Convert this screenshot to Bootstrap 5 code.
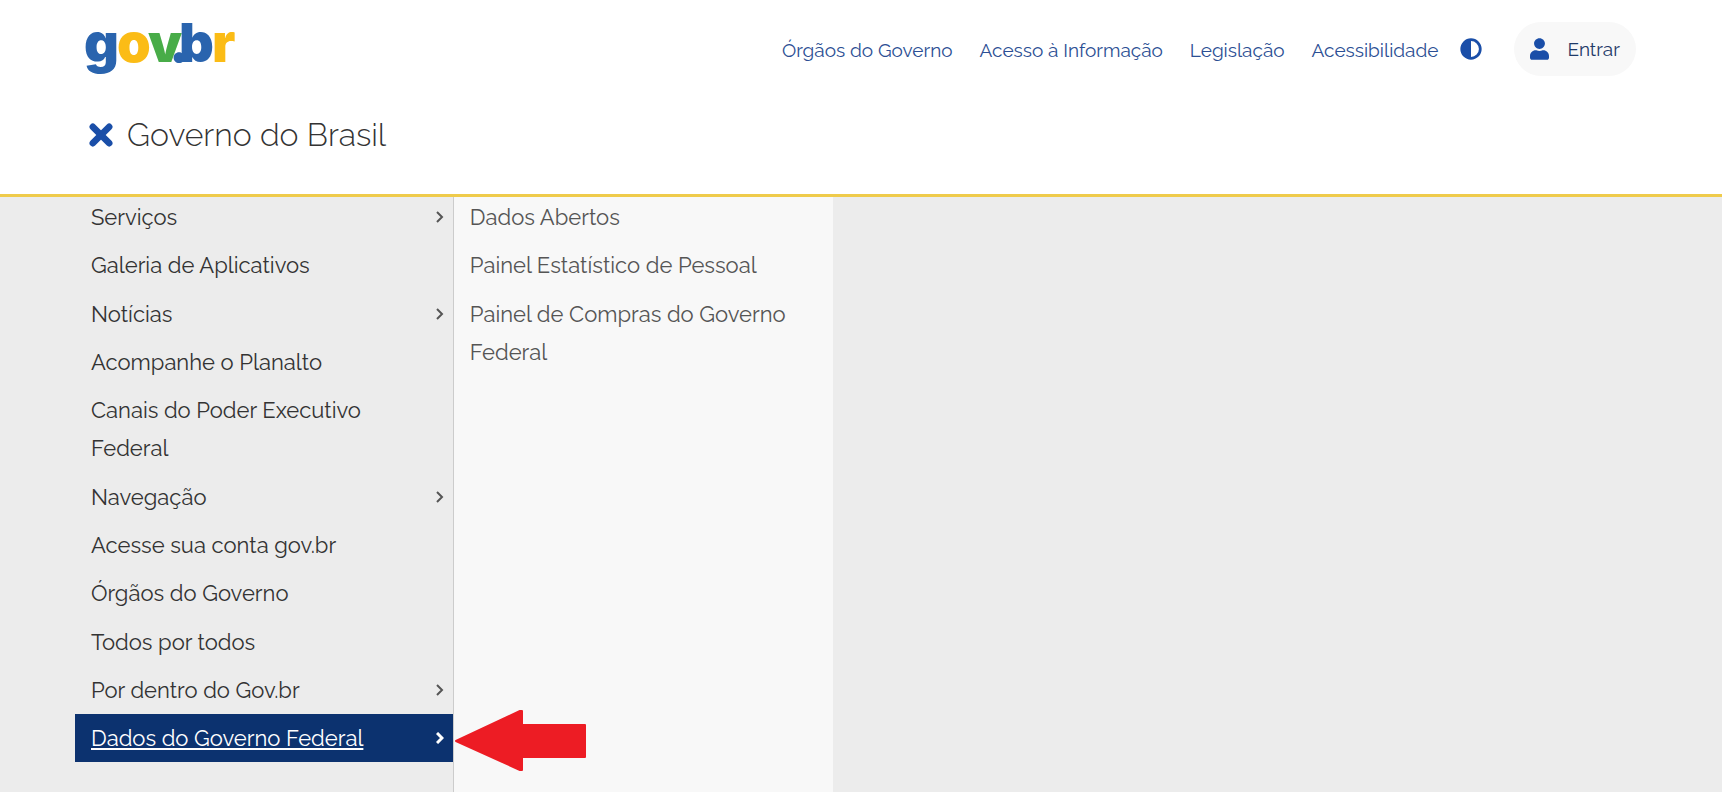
<!DOCTYPE html>
<html lang="pt-BR">
<head>
<meta charset="utf-8">
<meta name="viewport" content="width=device-width, initial-scale=1">
<title>Governo do Brasil</title>
<link href="https://cdn.jsdelivr.net/npm/bootstrap@5.3.0/dist/css/bootstrap.min.css" rel="stylesheet">
<style>
  body { font-family: Raleway, "Open Sans", sans-serif; background: #ececec; color: #333; }
  .site-header { background: #fff; border-bottom: 3px solid #efcb4b; padding: 22px 5% 39px; }
  .brand-logo { width: 152px; height: 60px; overflow: visible; }
  .top-nav { gap: 27px; padding-top: 2px; }
  .top-link { color: #2c4f94; font-size: 19px; line-height: 28px; text-decoration: none; }
  .icon-btn { color: #1a4ea8; line-height: 0; }
  .contrast-btn { margin: 0 32px 0 22px; }
  .close-btn { margin-left: 3px; }
  .signin { background: #f8f8f8; color: #1f3a68; font-size: 19px; line-height: 28px; padding: 13px 16px; gap: 18px; --bs-btn-hover-bg: #eee; }
  .signin svg { color: #1a4ea8; }
  .title-row { margin-top: 33px; }
  .site-title { font-size: 32px; font-weight: 350; line-height: 40px; margin-left: 14px; }
  .menu-area { padding-left: 75px; margin-top: -4px; }
  .menu-col { width: 22vw; }
  .menu-main { border-right: 1px solid #ccc; }
  .menu-sub { background: #f8f8f8; }
  .menu-item { display: flex; justify-content: space-between; align-items: center; padding: .3vw 9px .3vw 16px; font-size: 22px; line-height: 38px; color: #333; text-decoration: none; }
  .menu-label { max-width: 320px; }
  .menu-sub .menu-item { color: #555; }
  .menu-item.current { background: #0c326f; color: #fff; }
  .current .menu-label { text-decoration: underline; text-decoration-thickness: 2px; text-underline-offset: 2px; }
  .chev { color: #555; }
  .current .chev { color: #fff; }
  .pointer-arrow { left: 100%; top: -5px; margin-left: 2px; }
</style>
</head>
<body class="d-flex flex-column min-vh-100">
<header class="site-header position-relative z-1">
  <div class="d-flex justify-content-between align-items-start">
    <a href="#" aria-label="gov.br">
      <svg class="brand-logo d-block" viewBox="0 0 152 60" font-family="Inter, sans-serif" font-weight="900" font-size="54">
        <text x="31" y="40" fill="#fbbc16">o</text>
        <text x="-2" y="40" fill="#2a64ae">g</text>
        <text x="62" y="40" fill="#48ac48">v</text>
        <text x="83" y="40" fill="#2a64ae">.</text>
        <text x="126" y="40" fill="#fbbc16">r</text>
        <text x="93" y="40" fill="#2a64ae">b</text>
      </svg>
    </a>
    <div class="d-flex align-items-center">
      <nav class="top-nav d-flex" aria-label="Acesso rápido">
        <a class="top-link" href="#">Órgãos do Governo</a>
        <a class="top-link" href="#">Acesso à Informação</a>
        <a class="top-link" href="#">Legislação</a>
        <a class="top-link" href="#">Acessibilidade</a>
      </nav>
      <button class="btn icon-btn contrast-btn border-0 p-0" type="button" aria-label="Alto contraste">
        <svg width="22" height="22" viewBox="0 0 512 512" fill="currentColor"><path d="M8 256a248 248 0 1 0 496 0A248 248 0 1 0 8 256zm248 184V72a184 184 0 0 1 0 368z"/></svg>
      </button>
      <button class="btn signin border-0 rounded-pill d-flex align-items-center" type="button">
        <svg width="19" height="22" viewBox="0 0 448 512" fill="currentColor"><path d="M224 256c70.700 0 128-57.300 128-128S294.700 0 224 0 96 57.300 96 128s57.300 128 128 128zm89.600 32h-16.700a174 174 0 0 1-145.800 0h-16.700C60.200 288 0 348.200 0 422.400V464c0 26.500 21.500 48 48 48h352c26.500 0 48-21.500 48-48v-41.600C448 348.200 387.800 288 313.600 288z"/></svg>
        <span>Entrar</span>
      </button>
    </div>
  </div>
  <div class="title-row d-flex align-items-center">
    <button class="btn icon-btn close-btn border-0 p-0" type="button" aria-label="Fechar menu">
      <svg width="24" height="24" viewBox="0 0 22 22" stroke="currentColor" stroke-width="6" stroke-linecap="round"><path d="M3.500 3.500l15 15M18.500 3.500l-15 15"/></svg>
    </button>
    <h1 class="site-title mb-0">Governo do Brasil</h1>
  </div>
</header>
<main class="menu-area d-flex flex-grow-1">
  <nav class="menu-col menu-main" aria-label="Menu principal">
    <a class="menu-item" href="#"><span class="menu-label">Serviços</span><svg class="chev" width="8" height="12" viewBox="0 0 8 12" fill="none" stroke="currentColor" stroke-width="2"><path d="M1 1l5 5-5 5"/></svg></a>
    <a class="menu-item" href="#"><span class="menu-label">Galeria de Aplicativos</span></a>
    <a class="menu-item" href="#"><span class="menu-label">Notícias</span><svg class="chev" width="8" height="12" viewBox="0 0 8 12" fill="none" stroke="currentColor" stroke-width="2"><path d="M1 1l5 5-5 5"/></svg></a>
    <a class="menu-item" href="#"><span class="menu-label">Acompanhe o Planalto</span></a>
    <a class="menu-item" href="#"><span class="menu-label">Canais do Poder Executivo Federal</span></a>
    <a class="menu-item" href="#"><span class="menu-label">Navegação</span><svg class="chev" width="8" height="12" viewBox="0 0 8 12" fill="none" stroke="currentColor" stroke-width="2"><path d="M1 1l5 5-5 5"/></svg></a>
    <a class="menu-item" href="#"><span class="menu-label">Acesse sua conta gov.br</span></a>
    <a class="menu-item" href="#"><span class="menu-label">Órgãos do Governo</span></a>
    <a class="menu-item" href="#"><span class="menu-label">Todos por todos</span></a>
    <a class="menu-item" href="#"><span class="menu-label">Por dentro do Gov.br</span><svg class="chev" width="8" height="12" viewBox="0 0 8 12" fill="none" stroke="currentColor" stroke-width="2"><path d="M1 1l5 5-5 5"/></svg></a>
    <a class="menu-item current position-relative" href="#" aria-current="true"><span class="menu-label">Dados do Governo Federal</span><svg class="chev" width="8" height="12" viewBox="0 0 8 12" fill="none" stroke="currentColor" stroke-width="3"><path d="M1 1l5 5-5 5"/></svg>
      <svg class="pointer-arrow position-absolute" width="132" height="63" viewBox="0 0 132 63" fill="#ed1c24" stroke="#ed1c24" stroke-width="2" stroke-linejoin="round"><path d="M1 32L65 2h2v14h63v32H67v13h-2z"/></svg>
    </a>
  </nav>
  <nav class="menu-col menu-sub" aria-label="Dados do Governo Federal">
    <a class="menu-item" href="#"><span class="menu-label">Dados Abertos</span></a>
    <a class="menu-item" href="#"><span class="menu-label">Painel Estatístico de Pessoal</span></a>
    <a class="menu-item" href="#"><span class="menu-label">Painel de Compras do Governo Federal</span></a>
  </nav>
</main>
<script src="https://cdn.jsdelivr.net/npm/bootstrap@5.3.0/dist/js/bootstrap.bundle.min.js"></script>
</body>
</html>
